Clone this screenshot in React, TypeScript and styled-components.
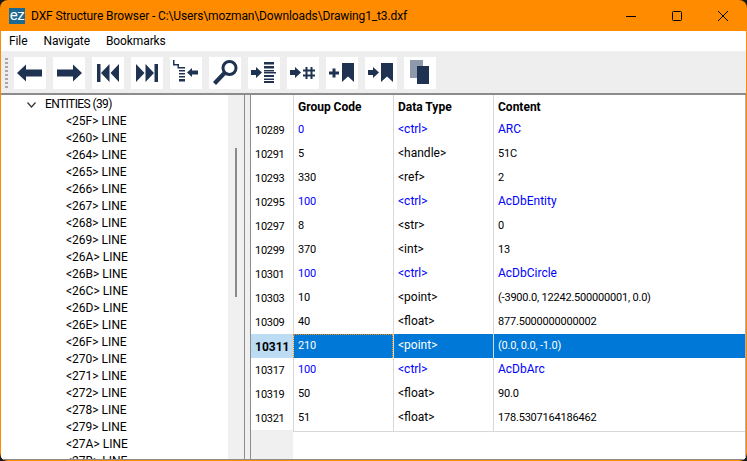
import React from 'react'
import styled, { createGlobalStyle } from 'styled-components'

const GlobalStyle = createGlobalStyle`
  html, body {
    margin: 0;
    padding: 0;
    background: #1a1a1a;
    overflow: hidden;
  }
`

const NAVY = '#1f3251'

const Window = styled.div`
  width: 747px;
  height: 461px;
  box-sizing: border-box;
  display: flex;
  flex-direction: column;
  overflow: hidden;
  border-radius: 8px;
  background: #ff8c00;
  padding: 0 1px 1px 1px;
  font-family: Roboto, 'Noto Sans', sans-serif;
  font-size: 12px;
  color: #000;
`

const TitleBar = styled.div`
  height: 31px;
  flex: none;
  display: flex;
  align-items: center;
  padding-left: 8px;
`

const AppIcon = styled.div`
  width: 16px;
  height: 16px;
  background: #1c6a94;
  color: #fff;
  font-size: 15px;
  line-height: 15px;
  text-align: center;
  letter-spacing: -0.5px;
`

const TitleText = styled.span`
  margin-left: 6px;
  font-size: 12px;
  letter-spacing: -0.12px;
  flex: 1;
  white-space: nowrap;
`

const CaptionButton = styled.div`
  width: 46px;
  height: 31px;
  display: flex;
  align-items: center;
  justify-content: center;
`

const MenuBar = styled.div`
  height: 21px;
  flex: none;
  box-sizing: border-box;
  background: #fff;
  display: flex;
  align-items: center;
  padding-left: 8px;
  gap: 16px;
  border-bottom: 1px solid #f0f0f0;
`

const MenuItem = styled.span`
  font-size: 12px;
  letter-spacing: -0.1px;
`

const ToolBar = styled.div`
  height: 43px;
  flex: none;
  box-sizing: border-box;
  background: #eeeeee;
  display: flex;
  align-items: center;
  padding-left: 4px;
  border-bottom: 2px solid #8c8c8c;
`

const Grip = styled.div`
  width: 3px;
  height: 30px;
  margin-right: 6px;
  background: repeating-linear-gradient(to bottom, #a8a8a8 0 2px, transparent 2px 4px);
`

const ToolButtons = styled.div`
  display: flex;
  gap: 7px;
`

const ToolButton = styled.div`
  width: 32px;
  height: 32px;
  background: #fff;
  display: flex;
  align-items: center;
  justify-content: center;
`

const Panes = styled.div`
  flex: 1;
  min-height: 0;
  display: flex;
  background: #f0f0f0;
  border-bottom: 1px solid #8c8c8c;
`

const TreePane = styled.div`
  width: 227px;
  flex: none;
  background: #fff;
  overflow: hidden;
  padding-top: 1px;
`

const TreeRow = styled.div<{ $depth: number }>`
  height: 17px;
  line-height: 17px;
  font-size: 12px;
  letter-spacing: ${({ $depth }) => ($depth === 0 ? -0.6 : 0)}px;
  white-space: nowrap;
  display: flex;
  align-items: center;
  padding-left: ${({ $depth }) => ($depth === 0 ? 26 : 65)}px;
  color: #000;
`

const Chevron = styled.svg`
  width: 9px;
  height: 6px;
  margin-right: 9px;
`

const ScrollTrack = styled.div`
  width: 16px;
  flex: none;
  background: #f0f0f0;
  display: flex;
  justify-content: center;
  padding-top: 53px;
  box-sizing: border-box;
`

const ScrollThumb = styled.div`
  width: 2px;
  height: 149px;
  background: #8a8a8a;
`

const Splitter = styled.div`
  width: 7px;
  flex: none;
  box-sizing: border-box;
  background: #f0f0f0;
  border-left: 1px solid #8c8c8c;
  border-right: 1px solid #8c8c8c;
`

const TablePane = styled.div`
  flex: 1;
  min-width: 0;
  background: #fff;
  display: flex;
  flex-direction: column;
  border-right: 1px solid #b0b0b0;
`

const HeaderRow = styled.div`
  height: 23px;
  flex: none;
  display: grid;
  grid-template-columns: 42px 100px 100px 1fr;
`

const HeaderCorner = styled.div`
  background: #fff;
`

const HeaderCell = styled.div`
  font-weight: 700;
  font-size: 12px;
  line-height: 25px;
  padding-left: 4px;
  border-left: 1px solid #d8d8d8;
`

const Row = styled.div`
  height: 24px;
  flex: none;
  box-sizing: border-box;
  display: grid;
  grid-template-columns: 42px 100px 100px 1fr;
`

const RowHead = styled.div<{ $current?: boolean }>`
  line-height: 26px;
  padding-left: 4px;
  font-size: ${({ $current }) => ($current ? 12 : 11)}px;
  letter-spacing: ${({ $current }) => ($current ? 0 : -0.3)}px;
  font-weight: ${({ $current }) => ($current ? 700 : 400)};
  background: ${({ $current }) => ($current ? '#bcdcf4' : '#fff')};
`

const Cell = styled.div<{ $blue?: boolean; $selected?: boolean; $focus?: boolean; $numeric?: boolean }>`
  box-sizing: border-box;
  line-height: 23px;
  padding-left: 4px;
  font-size: ${({ $numeric }) => ($numeric ? 11 : 12)}px;
  letter-spacing: ${({ $numeric }) => ($numeric ? -0.2 : 0)}px;
  white-space: nowrap;
  overflow: hidden;
  border-left: 1px solid #d8d8d8;
  border-bottom: 1px solid #d8d8d8;
  color: ${({ $blue, $selected }) => ($selected ? '#fff' : $blue ? '#0000ff' : '#000')};
  background: ${({ $selected }) => ($selected ? '#0078d7' : '#fff')};
  outline: ${({ $focus }) => ($focus ? '1px dotted #ff8c00' : 'none')};
  outline-offset: -1px;
`

const TableFoot = styled.div`
  flex: 1;
  display: grid;
  grid-template-columns: 42px 1fr;
`

const FootHead = styled.div`
  background: #f0f0f0;
`

const treeItems = [
  '25F', '260', '264', '265', '266', '267', '268', '269', '26A', '26B', '26C', '26D', '26E', '26F',
  '270', '271', '272', '278', '279', '27A', '27B',
]

type DataRow = { line: string; code: string; type: string; content: string; blue?: boolean }

const rows: DataRow[] = [
  { line: '10289', code: '0', type: '<ctrl>', content: 'ARC', blue: true },
  { line: '10291', code: '5', type: '<handle>', content: '51C' },
  { line: '10293', code: '330', type: '<ref>', content: '2' },
  { line: '10295', code: '100', type: '<ctrl>', content: 'AcDbEntity', blue: true },
  { line: '10297', code: '8', type: '<str>', content: '0' },
  { line: '10299', code: '370', type: '<int>', content: '13' },
  { line: '10301', code: '100', type: '<ctrl>', content: 'AcDbCircle', blue: true },
  { line: '10303', code: '10', type: '<point>', content: '(-3900.0, 12242.500000001, 0.0)' },
  { line: '10309', code: '40', type: '<float>', content: '877.5000000000002' },
  { line: '10311', code: '210', type: '<point>', content: '(0.0, 0.0, -1.0)' },
  { line: '10317', code: '100', type: '<ctrl>', content: 'AcDbArc', blue: true },
  { line: '10319', code: '50', type: '<float>', content: '90.0' },
  { line: '10321', code: '51', type: '<float>', content: '178.5307164186462' },
]

const Icon = ({ children }: { children: React.ReactNode }) => (
  <ToolButton>
    <svg width="28" height="28" viewBox="0 0 28 28" fill={NAVY}>
      {children}
    </svg>
  </ToolButton>
)

const ARROW = 'M1 11 H6 V8 L12 13.5 L6 19 V16 H1 Z'
const BOOKMARK = 'M14 4 H26 V23 L20 17.5 L14 23 Z'

const toolIcons: React.ReactNode[] = [
  <path key="a" d="M1 14 L10 5.5 V10.5 H26 V17.5 H10 V22.5 Z" />,
  <path key="b" d="M27 14 L18 5.5 V10.5 H2 V17.5 H18 V22.5 Z" />,
  <path key="c" d="M3 5 H6.5 V23 H3 Z M15.5 5 V23 L7 14 Z M25 5 V23 L16.5 14 Z" />,
  <path key="d" d="M25 5 H21.5 V23 H25 Z M12.5 5 V23 L21 14 Z M3 5 V23 L11.5 14 Z" />,
  <path
    key="e"
    d="M1 1 H2.5 V5 H7 V8 H13 V9.5 H5.5 V6.5 H1 Z M7 11 H13 V12.5 H7 Z M7 14 H13 V15.5 H7 Z M7 17 H13 V18.5 H7 Z M7 20 H13 V22.5 H7 Z M15 13.5 L20 9 V11.5 H26 V15.5 H20 V18 Z"
  />,
  <g key="f">
    <circle cx="18.5" cy="9" r="6.5" fill="none" stroke={NAVY} strokeWidth="3" />
    <path d="M13.5 14 L3.5 24.5" stroke={NAVY} strokeWidth="4.2" />
  </g>,
  <path
    key="g"
    d="M14 3 H24 V5.5 H14 Z M14 7 H24 V9.5 H14 Z M14 11 H24 V12.5 H14 Z M14 13 H26 V14.5 H14 Z M14 16 H24 V18 H14 Z M14 19.5 H24 V21 H14 Z M14 22 H24 V24 H14 Z M1 11 H6 V8 L12 13.5 L6 19 V16 H1 Z"
  />,
  <path
    key="h"
    d={`${ARROW} M16.5 8 H18.5 V20 H16.5 Z M21.5 8 H23.5 V20 H21.5 Z M14 10.5 H26 V12.5 H14 Z M14 15.5 H26 V17.5 H14 Z`}
  />,
  <path key="i" d={`M1 12.5 H4.5 V9.5 H7.5 V12.5 H11 V15.5 H7.5 V18.5 H4.5 V15.5 H1 Z ${BOOKMARK}`} />,
  <path key="j" d={`${ARROW} ${BOOKMARK}`} />,
  <g key="k">
    <path fill="#8f99ac" d="M4 1 H17 V19 H4 Z" />
    <path d="M11 7 H23 V25 H11 Z" />
  </g>,
]

const isNumeric = (text: string) => /^[\d(]/.test(text)

const App = () => (
  <Window>
    <GlobalStyle />
    <TitleBar>
      <AppIcon>ez</AppIcon>
      <TitleText>DXF Structure Browser - C:\Users\mozman\Downloads\Drawing1_t3.dxf</TitleText>
      <CaptionButton>
        <svg width="10" height="10" viewBox="0 0 10 10">
          <path d="M0 5.5 H10" stroke="#000" strokeWidth="1" />
        </svg>
      </CaptionButton>
      <CaptionButton>
        <svg width="10" height="10" viewBox="0 0 10 10" fill="none">
          <rect x="0.5" y="0.5" width="9" height="9" rx="1" stroke="#000" />
        </svg>
      </CaptionButton>
      <CaptionButton>
        <svg width="10" height="10" viewBox="0 0 10 10">
          <path d="M0 0 L10 10 M10 0 L0 10" stroke="#000" strokeWidth="1" />
        </svg>
      </CaptionButton>
    </TitleBar>
    <MenuBar>
      <MenuItem>File</MenuItem>
      <MenuItem>Navigate</MenuItem>
      <MenuItem>Bookmarks</MenuItem>
    </MenuBar>
    <ToolBar>
      <Grip />
      <ToolButtons>
        {toolIcons.map((icon, i) => (
          <Icon key={i}>{icon}</Icon>
        ))}
      </ToolButtons>
    </ToolBar>
    <Panes>
      <TreePane>
        <TreeRow $depth={0}>
          <Chevron viewBox="0 0 9 6" fill="none">
            <path d="M0.5 0.5 L4.5 5 L8.5 0.5" stroke="#333" strokeWidth="1.2" />
          </Chevron>
          ENTITIES (39)
        </TreeRow>
        {treeItems.map((id) => (
          <TreeRow key={id} $depth={1}>
            {`<${id}> LINE`}
          </TreeRow>
        ))}
      </TreePane>
      <ScrollTrack>
        <ScrollThumb />
      </ScrollTrack>
      <Splitter />
      <TablePane>
        <HeaderRow>
          <HeaderCorner />
          <HeaderCell>Group Code</HeaderCell>
          <HeaderCell>Data Type</HeaderCell>
          <HeaderCell>Content</HeaderCell>
        </HeaderRow>
        {rows.map((r) => {
          const selected = r.line === '10311'
          return (
            <Row key={r.line}>
              <RowHead $current={selected}>{r.line}</RowHead>
              <Cell $blue={r.blue} $selected={selected} $focus={selected} $numeric>
                {r.code}
              </Cell>
              <Cell $blue={r.blue} $selected={selected}>
                {r.type}
              </Cell>
              <Cell $blue={r.blue} $selected={selected} $numeric={isNumeric(r.content)}>
                {r.content}
              </Cell>
            </Row>
          )
        })}
        <TableFoot>
          <FootHead />
        </TableFoot>
      </TablePane>
    </Panes>
  </Window>
)

export default App
